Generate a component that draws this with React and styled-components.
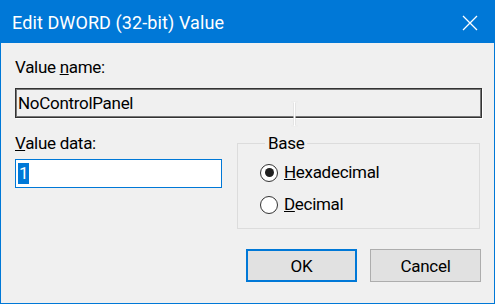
import React from "react";
import styled, { createGlobalStyle } from "styled-components";

const GlobalStyle = createGlobalStyle`
  html, body {
    margin: 0;
    padding: 0;
    background: #f0f0f0;
  }
  body {
    font-family: Roboto, "Liberation Sans", Arial, sans-serif;
    font-size: 17px;
    letter-spacing: -0.3px;
    color: #000;
  }
  * {
    box-sizing: border-box;
  }
`;

const Window = styled.div`
  width: 495px;
  height: 304px;
  display: flex;
  flex-direction: column;
  border: 1px solid #0078d7;
  background: #f0f0f0;
`;

const TitleBar = styled.div`
  height: 42px;
  flex: none;
  display: flex;
  align-items: flex-start;
  justify-content: space-between;
  padding: 11px 16px 0 11px;
  background: #0078d7;
  color: #fff;
`;

const Title = styled.div`
  font-size: 18px;
  line-height: 22px;
  letter-spacing: 0.1px;
`;

const CloseButton = styled.div`
  width: 16px;
  height: 16px;
  margin-top: 3px;
  display: flex;
`;

const Body = styled.div`
  flex: 1;
  display: flex;
  flex-direction: column;
  padding: 14px 12px 0 14px;
`;

const Label = styled.div`
  line-height: 20px;
  margin-bottom: ${(p) => p.gap || 0}px;
  white-space: nowrap;
`;

const NameField = styled.div`
  position: relative;
  height: 30px;
  margin-top: 11px;
  padding-left: 2px;
  display: flex;
  align-items: center;
  border: 1px solid #333;
  box-shadow: inset 0 0 0 1px #777, 1px 1px 0 #ffffff;
  background: #f0f0f0;
`;

const Cursor = styled.svg`
  position: absolute;
  left: 274px;
  top: 12px;
`;

const DataRow = styled.div`
  display: grid;
  grid-template-columns: 207px 243px;
  column-gap: 15px;
  align-items: start;
  margin-top: 15px;
`;

const Column = styled.div`
  display: flex;
  flex-direction: column;
`;

const DataField = styled.div`
  height: 29px;
  display: flex;
  align-items: center;
  padding-left: 2px;
  border: 1px solid #0078d7;
  background: #fff;
`;

const Selected = styled.span`
  display: inline-block;
  height: 21px;
  line-height: 21px;
  padding: 0 1px;
  background: #0078d7;
  color: #fff;
`;

const GroupBox = styled.fieldset`
  margin: 0;
  height: 96px;
  padding: 9px 10px 0 22px;
  border: 1px solid #dcdcdc;
  display: flex;
  flex-direction: column;
  gap: 12px;
`;

const Legend = styled.legend`
  margin-left: 5px;
  padding: 0 3px;
  line-height: 20px;
  font-size: 17px;
`;

const RadioRow = styled.div`
  display: flex;
  align-items: center;
  gap: 6px;
  height: 20px;
  line-height: 20px;
`;

const RadioCircle = styled.span`
  width: 18px;
  height: 18px;
  flex: none;
  border-radius: 50%;
  border: 1px solid #333;
  background: #fff;
  display: flex;
  align-items: center;
  justify-content: center;
  margin-top: 1px;

  &::after {
    content: "";
    width: 9px;
    height: 9px;
    border-radius: 50%;
    background: ${(p) => (p.checked ? "#1f1f1f" : "transparent")};
  }
`;

const ButtonRow = styled.div`
  display: flex;
  justify-content: flex-end;
  gap: 13px;
  margin-top: 20px;
  padding-right: 1px;
`;

const Button = styled.div`
  width: 111px;
  height: 33px;
  display: flex;
  align-items: center;
  justify-content: center;
  background: #e1e1e1;
  border: ${(p) => (p.primary ? "2px solid #0078d7" : "1px solid #adadad")};
`;

function Radio({ checked, children }) {
  return (
    <RadioRow>
      <RadioCircle checked={checked} />
      <span>{children}</span>
    </RadioRow>
  );
}

export default function App() {
  return (
    <>
      <GlobalStyle />
      <Window>
        <TitleBar>
          <Title>Edit DWORD (32-bit) Value</Title>
          <CloseButton>
            <svg width="16" height="16" viewBox="0 0 16 16">
              <path d="M1 1 L15 15 M15 1 L1 15" stroke="#fff" strokeWidth="1.3" fill="none" />
            </svg>
          </CloseButton>
        </TitleBar>
        <Body>
          <Label>
            Value <u>n</u>ame:
          </Label>
          <NameField>
            NoControlPanel
            <Cursor width="9" height="26" viewBox="0 0 9 26">
              <path
                d="M1 1 H8 M4.5 1 V25 M1 25 H8"
                stroke="#dcdcdc"
                strokeWidth="2.2"
                fill="none"
              />
              <path
                d="M1 1 H8 M4.5 1 V25 M1 25 H8"
                stroke="#ffffff"
                strokeWidth="1"
                fill="none"
              />
            </Cursor>
          </NameField>
          <DataRow>
            <Column>
              <Label gap={6}>
                <u>V</u>alue data:
              </Label>
              <DataField>
                <Selected>1</Selected>
              </DataField>
            </Column>
            <GroupBox>
              <Legend>Base</Legend>
              <Radio checked>
                <u>H</u>exadecimal
              </Radio>
              <Radio>
                <u>D</u>ecimal
              </Radio>
            </GroupBox>
          </DataRow>
          <ButtonRow>
            <Button primary>OK</Button>
            <Button>Cancel</Button>
          </ButtonRow>
        </Body>
      </Window>
    </>
  );
}
